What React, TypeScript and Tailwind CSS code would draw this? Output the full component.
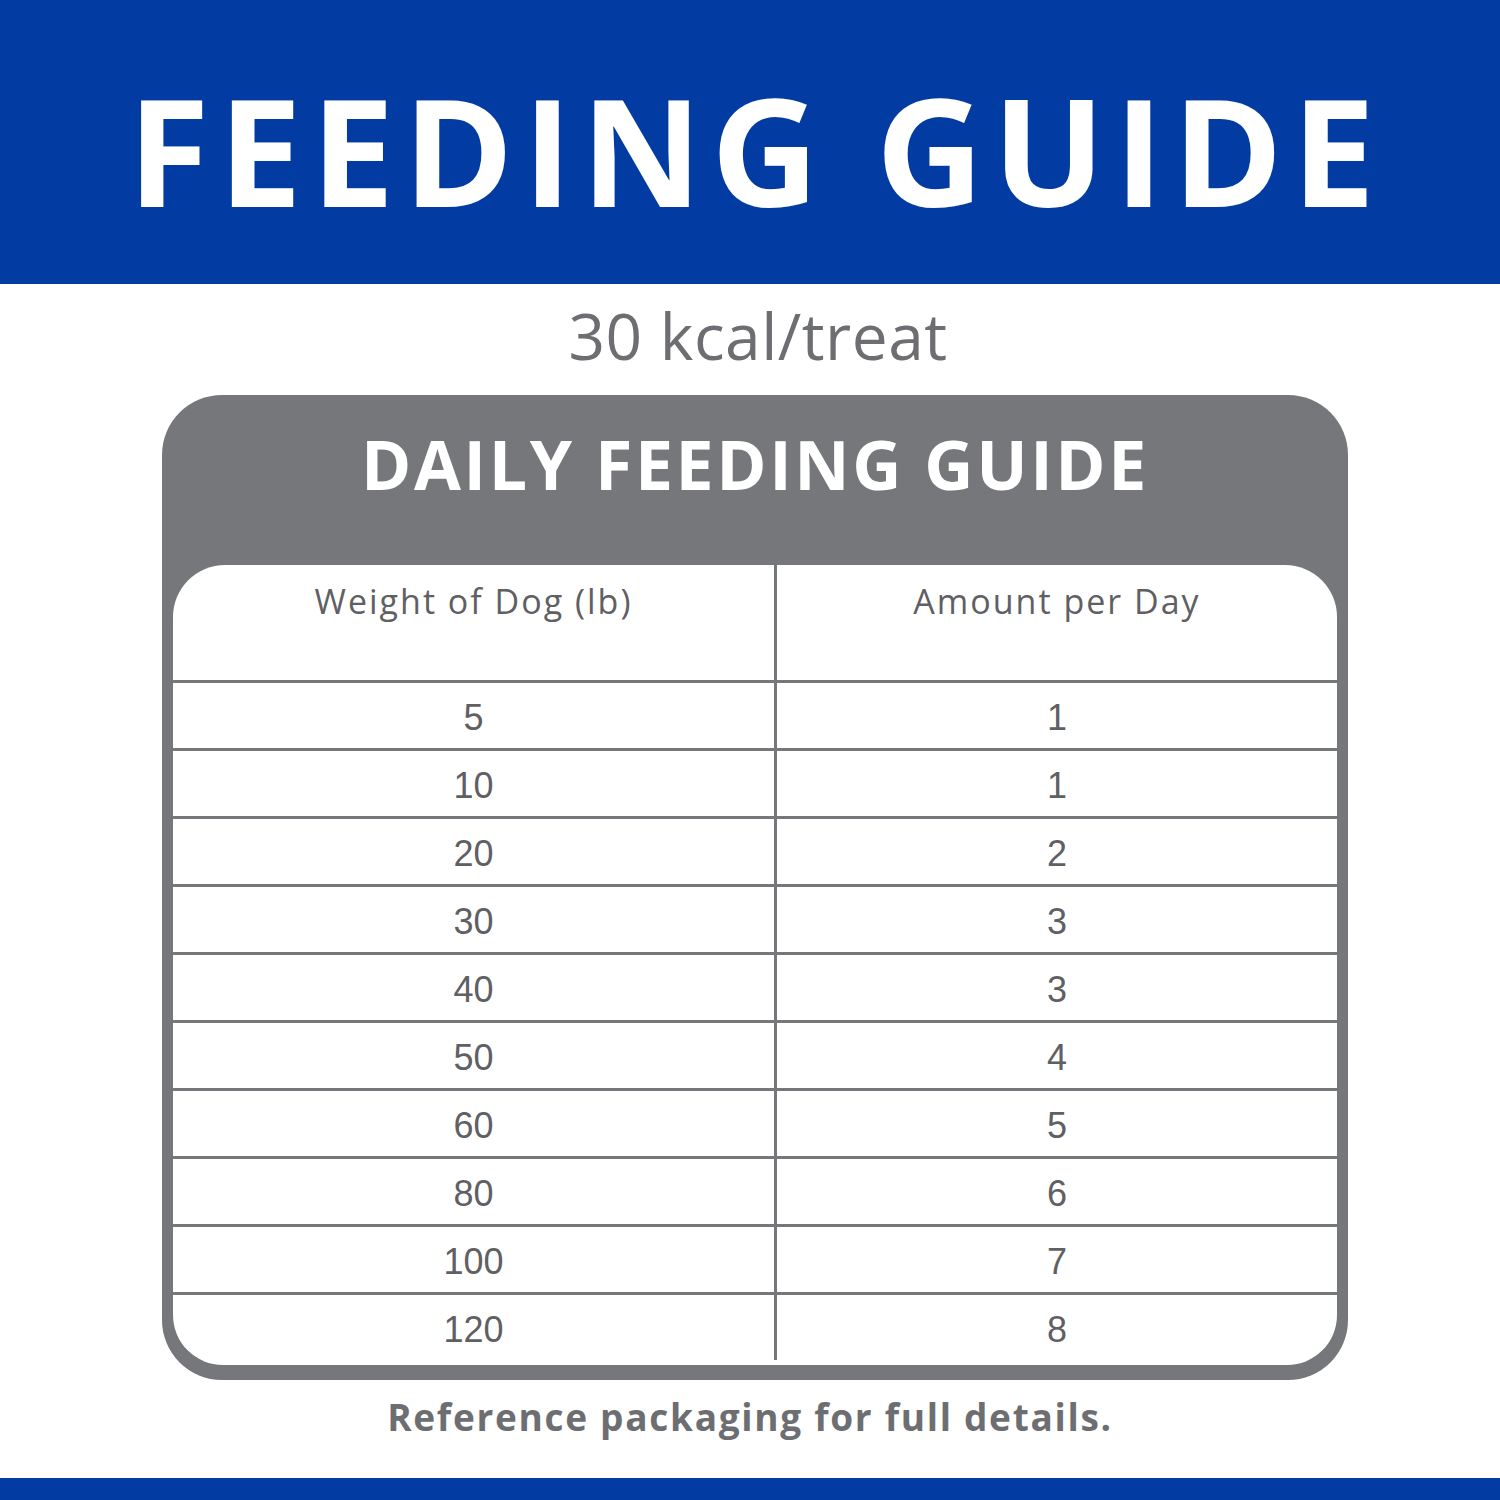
import React from "react";

const rows: [string, string][] = [
  ["5", "1"],
  ["10", "1"],
  ["20", "2"],
  ["30", "3"],
  ["40", "3"],
  ["50", "4"],
  ["60", "5"],
  ["80", "6"],
  ["100", "7"],
  ["120", "8"],
];

export default function App() {
  return (
    <div className="w-[1500px] h-[1500px] bg-white flex flex-col overflow-hidden">
      <div className="h-[284px] bg-[#023ca3] flex items-center justify-center">
        <h1
          className="text-white font-bold text-[149px] leading-none tracking-[9px] pt-[14px] pl-[12px]"
          style={{ fontFamily: "'Open Sans', 'Liberation Sans', sans-serif" }}
        >
          FEEDING GUIDE
        </h1>
      </div>
      <div
        className="h-[111px] flex items-start justify-center pt-[20px] pl-[16px] text-[#6d6e71] text-[64px] leading-none tracking-[0.5px]"
        style={{ fontFamily: "'Open Sans', 'Liberation Sans', sans-serif" }}
      >
        30 kcal/treat
      </div>
      <div className="mx-[162px] w-[1186px] h-[985px] bg-[#76777b] rounded-[60px] flex flex-col px-[11px] pb-[15px]">
        <div
          className="h-[170px] flex items-start justify-center pt-[35px] text-white font-bold text-[68px] leading-none tracking-[2.6px]"
          style={{ fontFamily: "'Open Sans', 'Liberation Sans', sans-serif" }}
        >
          DAILY FEEDING GUIDE
        </div>
        <div className="flex-1 bg-white rounded-t-[52px] rounded-b-[50px] flex flex-col overflow-hidden">
          <div
            className="h-[115px] grid grid-cols-[601px_3px_1fr] text-[#5f6063] text-[34px] leading-none"
            style={{ fontFamily: "'Open Sans', 'Liberation Sans', sans-serif" }}
          >
            <div className="flex justify-center pt-[19px] tracking-[2px]">Weight of Dog (lb)</div>
            <div className="bg-[#76777b]" />
            <div className="flex justify-center pt-[19px] tracking-[2px]">Amount per Day</div>
          </div>
          {rows.map(([w, a], i) => (
            <div
              key={i}
              className="h-[68px] border-t-[3px] border-[#76777b] grid grid-cols-[601px_3px_1fr] text-[#5f6063] text-[36px] leading-none"
              style={{ fontFamily: "'Liberation Sans', Arial, sans-serif" }}
            >
              <div className="flex items-center justify-center pt-[4px]">{w}</div>
              <div className="bg-[#76777b]" />
              <div className="flex items-center justify-center pt-[4px]">{a}</div>
            </div>
          ))}
        </div>
      </div>
      <div
        className="h-[98px] flex items-start justify-center pt-[18px] text-[#6d6e71] font-bold text-[37px] leading-none tracking-[1.7px]"
        style={{ fontFamily: "'Open Sans', 'Liberation Sans', sans-serif" }}
      >
        Reference packaging for full details.
      </div>
      <div className="flex-1 bg-[#023ca3]" />
    </div>
  );
}
